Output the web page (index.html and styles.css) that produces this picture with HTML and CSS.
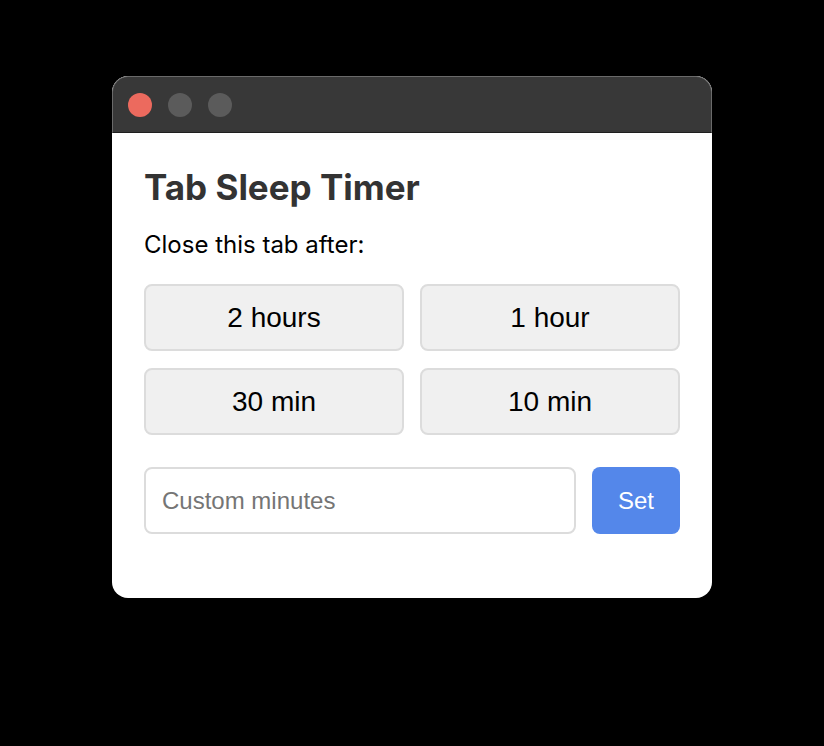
FILE: index.html
```html
<!DOCTYPE html>
<html lang="en">
<head>
    <meta charset="UTF-8">
    <meta name="viewport" content="width=device-width, initial-scale=1.0">
    <title>Tab Sleep Timer</title>
    <link rel="stylesheet" href="styles.css">
</head>
<body>
    <div class="window">
        <div class="titlebar">
            <span class="light close"></span>
            <span class="light"></span>
            <span class="light"></span>
        </div>
        <div class="content">
            <h1>Tab Sleep Timer</h1>
            <p class="label">Close this tab after:</p>
            <div class="options">
                <button class="option">2 hours</button>
                <button class="option">1 hour</button>
                <button class="option">30 min</button>
                <button class="option">10 min</button>
            </div>
            <div class="custom">
                <input type="number" class="minutes" placeholder="Custom minutes">
                <button class="set">Set</button>
            </div>
        </div>
    </div>
</body>
</html>
```

FILE: styles.css
```css
html, body {
    margin: 0;
    background-color: #000000;
}
body {
    padding-top: 76px;
}
.window {
    width: 600px;
    margin: 0 auto;
    background-color: #ffffff;
    border-radius: 16px;
    overflow: hidden;
}
.titlebar {
    box-sizing: border-box;
    height: 57px;
    background-color: #383838;
    border: 1px solid #6a6a6a;
    border-bottom: 1px solid #1e1e1e;
    border-radius: 16px 16px 0 0;
    display: flex;
    align-items: center;
    gap: 16px;
    padding-left: 15px;
}
.light {
    width: 24px;
    height: 24px;
    border-radius: 50%;
    background-color: #5b5b5b;
}
.light.close {
    background-color: #ec6a5e;
}
.content {
    padding: 34px 32px 64px;
}
h1 {
    margin: 0;
    font-family: Inter, 'Noto Sans', sans-serif;
    font-weight: 700;
    font-size: 35px;
    line-height: 40px;
    color: #333333;
}
.label {
    margin: 23px 0 0;
    font-family: Inter, 'Noto Sans', sans-serif;
    font-size: 24px;
    line-height: 30px;
    color: #000000;
}
.options {
    display: grid;
    grid-template-columns: 1fr 1fr;
    gap: 17px 16px;
    margin-top: 24px;
}
.option {
    height: 67px;
    font-family: 'Liberation Sans', Arial, sans-serif;
    font-size: 28px;
    color: #000000;
    background-color: #f0f0f0;
    border: 2px solid #dcdcdc;
    border-radius: 8px;
    cursor: pointer;
}
.custom {
    display: flex;
    gap: 16px;
    margin-top: 32px;
}
.minutes {
    flex: 1;
    height: 67px;
    box-sizing: border-box;
    padding: 0 16px;
    font-family: 'Liberation Sans', Arial, sans-serif;
    font-size: 24px;
    border: 2px solid #dcdcdc;
    border-radius: 8px;
    outline: none;
}
.minutes::placeholder {
    color: #757575;
}
.set {
    width: 88px;
    height: 67px;
    font-family: 'Liberation Sans', Arial, sans-serif;
    font-size: 24px;
    color: #ffffff;
    background-color: #5487ea;
    border: none;
    border-radius: 8px;
    cursor: pointer;
}
```
